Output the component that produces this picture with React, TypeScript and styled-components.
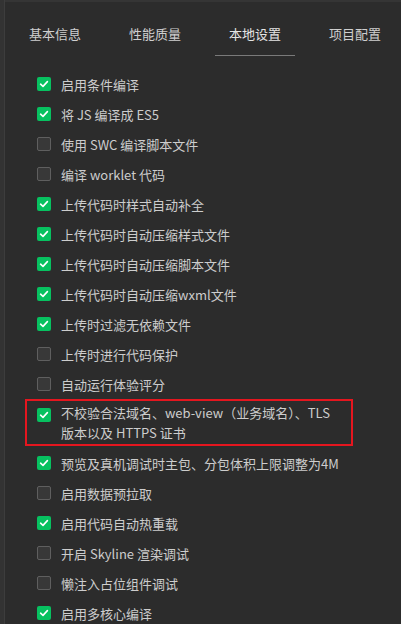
import React from "react";
import styled, { createGlobalStyle } from "styled-components";

const Global = createGlobalStyle`
  html, body { margin: 0; padding: 0; background: #2c2c2c; }
  body { font-family: "Microsoft YaHei", "Noto Sans CJK SC", "Noto Sans", sans-serif; }
`;

const Page = styled.div`
  display: flex;
  width: 401px;
  height: 624px;
  overflow: hidden;
`;

const SideStrip = styled.div`
  width: 4px;
  flex: none;
  background: #333333;
  border-right: 1px solid #3d3d3d;
`;

const Panel = styled.div`
  flex: 1;
  min-width: 0;
  background: #2c2c2c;
  border-top: 2px solid #353535;
  display: flex;
  flex-direction: column;
  overflow: hidden;
`;

const Tabs = styled.div`
  display: flex;
  flex: none;
  height: 54px;
  padding-left: 24px;
  overflow: hidden;
`;

const Tab = styled.div<{ $active?: boolean }>`
  flex: none;
  width: 100px;
  font-size: 13px;
  white-space: nowrap;
  color: ${(p) => (p.$active ? "#e4e4e4" : "#cfcfcf")};
  display: flex;
  flex-direction: column;
  align-items: flex-start;
  padding-top: 22px;
  box-sizing: border-box;
  position: relative;
`;

const Underline = styled.div`
  position: absolute;
  left: -14px;
  top: 53px;
  width: 80px;
  height: 1px;
  background: #7a7a7a;
`;

const List = styled.div`
  display: flex;
  flex: none;
  flex-direction: column;
  padding-left: 32px;
  padding-top: 13px;
`;

const Row = styled.div`
  display: flex;
  flex: none;
  align-items: center;
  height: 30px;
  gap: 10px;
  font-size: 13px;
  color: #cdcdcd;
  white-space: nowrap;
`;

const HighlightRow = styled.div`
  display: flex;
  flex: none;
  align-items: flex-start;
  gap: 10px;
  width: 328px;
  box-sizing: border-box;
  margin-left: -12px;
  margin-bottom: 2px;
  padding: 2px 0 1px 10px;
  border: 2px solid #e5161f;
  font-size: 13px;
  line-height: 20px;
  color: #cdcdcd;
`;

const BoxWrap = styled.div<{ $top?: number }>`
  flex: none;
  margin-top: ${(p) => p.$top ?? 0}px;
`;

const Box = styled.div<{ $on: boolean }>`
  width: 14px;
  height: 14px;
  box-sizing: border-box;
  border-radius: 2px;
  background: ${(p) => (p.$on ? "#07c160" : "#383838")};
  border: ${(p) => (p.$on ? "none" : "1px solid #5f5f5f")};
  display: flex;
  align-items: center;
  justify-content: center;
`;

const Check = ({ on }: { on: boolean }) => (
  <Box $on={on}>
    {on && (
      <svg width="10" height="10" viewBox="0 0 10 10">
        <path d="M1.6 5.2 L4 7.4 L8.4 2.6" fill="none" stroke="#fff" strokeWidth="1.6" strokeLinecap="round" strokeLinejoin="round" />
      </svg>
    )}
  </Box>
);

const items: [string, boolean][] = [
  ["启用条件编译", true],
  ["将 JS 编译成 ES5", true],
  ["使用 SWC 编译脚本文件", false],
  ["编译 worklet 代码", false],
  ["上传代码时样式自动补全", true],
  ["上传代码时自动压缩样式文件", true],
  ["上传代码时自动压缩脚本文件", true],
  ["上传代码时自动压缩wxml文件", true],
  ["上传时过滤无依赖文件", true],
  ["上传时进行代码保护", false],
  ["自动运行体验评分", false],
];

const items2: [string, boolean][] = [
  ["预览及真机调试时主包、分包体积上限调整为4M", true],
  ["启用数据预拉取", false],
  ["启用代码自动热重载", true],
  ["开启 Skyline 渲染调试", false],
  ["懒注入占位组件调试", false],
  ["启用多核心编译", true],
];

export default function App() {
  return (
    <Page>
      <Global />
      <SideStrip />
      <Panel>
        <Tabs>
          <Tab>基本信息</Tab>
          <Tab>性能质量</Tab>
          <Tab $active>
            本地设置
            <Underline />
          </Tab>
          <Tab>项目配置</Tab>
        </Tabs>
        <List>
          {items.map(([t, on]) => (
            <Row key={t}>
              <Check on={on} />
              <span>{t}</span>
            </Row>
          ))}
          <HighlightRow>
            <BoxWrap $top={5}>
              <Check on={true} />
            </BoxWrap>
            <span>
              不校验合法域名、web-view（业务域名）、TLS
              <br />
              版本以及 HTTPS 证书
            </span>
          </HighlightRow>
          {items2.map(([t, on]) => (
            <Row key={t}>
              <Check on={on} />
              <span>{t}</span>
            </Row>
          ))}
        </List>
      </Panel>
    </Page>
  );
}
